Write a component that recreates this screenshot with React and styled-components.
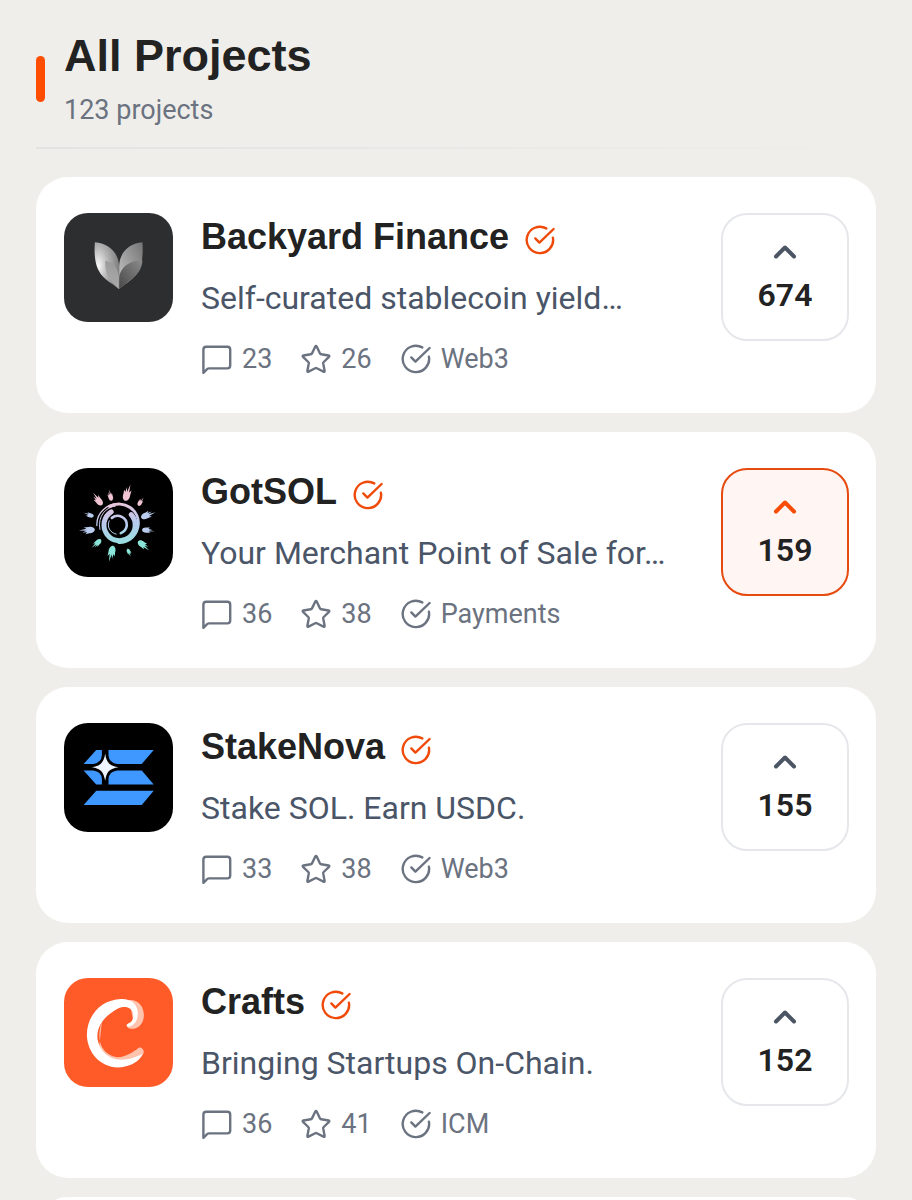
import React, { useState } from "react";
import styled, { createGlobalStyle } from "styled-components";

const GlobalStyle = createGlobalStyle`
  * {
    box-sizing: border-box;
  }
  html {
    scrollbar-width: none;
  }
  body {
    margin: 0;
    background-color: #efeeea;
    font-family: Roboto, "Noto Sans", sans-serif;
  }
`;

const Page = styled.main`
  padding: 28px 36px 0;
`;

const Header = styled.header`
  display: flex;
  align-items: center;
  gap: 19px;
`;

const Accent = styled.span`
  width: 9px;
  height: 46px;
  border-radius: 5px;
  background-color: #ff4d00;
`;

const Heading = styled.h1`
  margin: 0 0 7px;
  color: #222222;
  font-family: "Liberation Sans", Arial, sans-serif;
  font-size: 45px;
  font-weight: 700;
  line-height: 56px;
`;

const Total = styled.p`
  margin: 0;
  color: #6b7280;
  font-size: 27px;
  line-height: 38px;
`;

const Divider = styled.hr`
  height: 2px;
  margin: 18px 0 28px;
  border: none;
  background: linear-gradient(to right, #e3e3e2, #efeeea);
`;

const List = styled.ul`
  display: flex;
  flex-direction: column;
  gap: 19px;
  margin: 0;
  padding: 0;
  list-style: none;
`;

const Card = styled.li`
  display: flex;
  align-items: flex-start;
  gap: 28px;
  min-height: 64px;
  padding: 36px 27px 35px 28px;
  border-radius: 32px;
  background-color: #ffffff;
`;

const Logo = styled.svg`
  flex: none;
  width: 109px;
  height: 109px;
  border-radius: 24px;
  background-color: ${(props) => props.$color};
`;

const Info = styled.div`
  flex: 1;
  min-width: 0;
`;

const NameRow = styled.div`
  display: flex;
  align-items: center;
  gap: 15px;
  height: 48px;
  margin-bottom: 14px;
  color: #f04a0a;
  svg {
    margin-top: 6px;
  }
`;

const Name = styled.h2`
  margin: 0;
  color: #222222;
  font-family: "Liberation Sans", Arial, sans-serif;
  font-size: 36px;
  font-weight: 700;
  line-height: 48px;
`;

const Description = styled.p`
  margin: 0 0 19px;
  overflow: hidden;
  color: #4a5568;
  font-size: 32px;
  line-height: 46px;
  text-overflow: ellipsis;
  white-space: nowrap;
`;

const Meta = styled.div`
  display: flex;
  gap: 28px;
  color: #6b7280;
  font-size: 27px;
  line-height: 38px;
`;

const MetaItem = styled.span`
  display: flex;
  align-items: center;
  gap: 9px;
`;

const Icon = styled.svg`
  flex: none;
  width: 32px;
  height: 32px;
  fill: none;
  stroke: currentColor;
  stroke-width: 2.4;
  stroke-linecap: round;
  stroke-linejoin: round;
`;

const VoteButton = styled.button`
  display: flex;
  flex: none;
  flex-direction: column;
  align-items: center;
  width: 128px;
  height: 128px;
  padding: 19px 0 0;
  border: 2px solid ${(props) => (props.$voted ? "#e64a0f" : "#e5e7eb")};
  border-radius: 26px;
  background-color: ${(props) => (props.$voted ? "#fff5f2" : "#ffffff")};
  color: #222222;
  font-family: inherit;
  font-size: 32px;
  font-weight: 600;
  line-height: 50px;
  cursor: pointer;
  svg {
    width: 36px;
    height: 36px;
    stroke: ${(props) => (props.$voted ? "#f84b05" : "#4b5563")};
    stroke-width: 4;
  }
`;

const CheckIcon = () => (
  <Icon viewBox="0 0 32 32" aria-hidden="true">
    <path d="M22.3 4.4 A13.2 13.2 0 1 0 28.9 13.6" />
    <path d="M11.3 14.4 L15.4 18.6 L29.6 5" />
  </Icon>
);

const CommentIcon = () => (
  <Icon viewBox="0 0 32 32" aria-hidden="true">
    <path d="M2.4 29.8 V6.6 Q2.4 3.8 5.2 3.8 H26.4 Q29.2 3.8 29.2 6.6 V22.6 Q29.2 25.4 26.4 25.4 H8 Q6.4 25.4 5.4 26.8 Z" />
  </Icon>
);

const StarIcon = () => (
  <Icon viewBox="0 0 32 32" aria-hidden="true">
    <path d="M15.3 3.6 Q16 2.4 16.7 3.6 L20 10.4 Q20.4 11.2 21.2 11.3 L28.6 12.5 Q29.8 12.8 29 13.8 L23.7 19 Q23.1 19.6 23.2 20.4 L24.6 27.8 Q24.7 29.2 23.5 28.6 L16.8 25.2 Q16 24.8 15.2 25.2 L8.5 28.6 Q7.3 29.2 7.4 27.8 L8.8 20.4 Q8.9 19.6 8.3 19 L3 13.8 Q2.2 12.8 3.4 12.5 L10.8 11.3 Q11.6 11.2 12 10.4 Z" />
  </Icon>
);

const BackyardLogo = () => (
  <Logo $color="#2d2e30" viewBox="42 40 328 328" aria-hidden="true">
    <defs>
      <radialGradient id="leafLeft" cx="0.15" cy="0.5" r="0.8">
        <stop offset="0" stopColor="#f8f8f8" />
        <stop offset="0.5" stopColor="#b4b4b4" />
        <stop offset="1" stopColor="#828282" />
      </radialGradient>
      <linearGradient id="leafRight" x1="0" y1="1" x2="1" y2="0">
        <stop offset="0" stopColor="#c8c8c8" />
        <stop offset="1" stopColor="#747474" />
      </linearGradient>
      <linearGradient id="leafInner" x1="0" y1="0" x2="1" y2="1">
        <stop offset="0" stopColor="#818181" />
        <stop offset="1" stopColor="#cfcfcf" />
      </linearGradient>
      <linearGradient id="leafShade" x1="0" y1="1" x2="1" y2="0">
        <stop offset="0" stopColor="#484848" />
        <stop offset="1" stopColor="#8c8c8c" />
      </linearGradient>
    </defs>
    <path
      fill="url(#leafLeft)"
      d="M135 128 C174 130 206 157 208 200 L207 269 C177 240 126 236 135 128 Z"
    />
    <path
      fill="url(#leafRight)"
      d="M278 128 C240 131 209 157 208 200 L208 269 C237 240 286 236 278 128 Z"
    />
    <path
      fill="url(#leafInner)"
      d="M166 184 C192 188 205 207 207 234 L207 269 C190 252 164 232 166 184 Z"
      opacity="0.6"
    />
    <path
      fill="url(#leafShade)"
      d="M278 182 C244 181 210 202 208 236 L208 269 C237 242 276 228 278 182 Z"
    />
  </Logo>
);

// x, y, rotation and scale of every flame around the sun
const flames = [
  [146, 138, -39, 1.15],
  [182, 126, -15, 0.85],
  [231, 120, 15, 1.3],
  [271, 144, 30, 0.75],
  [290, 183, 66, 1.15],
  [291, 227, 93, 0.95],
  [278, 270, 127, 1.1],
  [237, 292, 156, 0.65],
  [186, 292, 192, 1.25],
  [143, 265, 225, 0.95],
  [117, 227, 263, 1.2],
  [120, 182, 287, 0.8],
];

const GotSolLogo = () => (
  <Logo $color="#000000" viewBox="42 40 328 328" aria-hidden="true">
    <defs>
      <linearGradient
        id="sunFill"
        gradientUnits="userSpaceOnUse"
        x1="190"
        y1="90"
        x2="210"
        y2="320"
      >
        <stop offset="0" stopColor="#f3c3d2" />
        <stop offset="0.25" stopColor="#eac6dc" />
        <stop offset="0.5" stopColor="#b9c9ee" />
        <stop offset="0.85" stopColor="#8fe3dc" />
        <stop offset="1" stopColor="#8aefcf" />
      </linearGradient>
    </defs>
    <g fill="none" stroke="url(#sunFill)" strokeLinecap="round">
      <path strokeWidth="15" d="M184 172 A47 47 0 1 0 244 180" />
      <path strokeWidth="9" d="M179 156 C219 133 276 166 264 219 C256 251 231 265 207 264" />
      <path strokeWidth="4" d="M141 213 C139 174 175 141 218 149" />
      <path strokeWidth="3" d="M150 225 C142 183 170 157 196 155" />
      <path strokeWidth="8" d="M186 190 C205 175 232 190 231 213 C230 223 223 232 213 236" />
      <path strokeWidth="3" d="M178 199 C170 216 180 235 199 239" />
    </g>
    {flames.map(([x, y, angle, size]) => {
      const color = y < 160 ? "#f1c4d4" : y < 240 ? "#b9ccee" : "#8be5d8";
      return (
        <path
          key={angle}
          fill={color}
          transform={`translate(${x} ${y}) rotate(${angle}) scale(${size})`}
          d="M0 15 C-6 14 -9 7 -8 0 L-9 -10 L-5 -5 L-4 -17 L-1 -6 L2 -25 L4 -6 L8 -12 L8 0 C9 7 6 14 0 15 Z"
        />
      );
    })}
  </Logo>
);

const StakeNovaLogo = () => (
  <Logo $color="#000000" viewBox="42 42 328 328" aria-hidden="true">
    <g fill="#3f98ff">
      <path d="M139 123 H156 V140 Q154 162 130 165 H101 Z" />
      <path d="M176 123 H312 L276 165 H202 Q178 162 176 140 Z" />
      <path d="M101 185 H130 Q154 188 156 210 V227 H139 Z" />
      <path d="M176 227 V210 Q178 188 202 185 H276 L312 227 Z" />
      <path d="M139 246 H312 L276 289 H101 Z" />
    </g>
    <path
      d="M166 134 C169 161 179 171 206 175 C179 179 170 188 166 216 C161 188 152 179 126 175 C152 171 162 161 166 134 Z"
      fill="#eef5ff"
    />
  </Logo>
);

const CraftsLogo = () => (
  <Logo $color="#ff5b29" viewBox="42 42 328 328" aria-hidden="true">
    <path
      fill="#ffc3ae"
      d="M238 108 C267 106 285 130 282 160 C279 184 262 196 243 195 C237 194 231 190 231 185 C231 177 248 177 249 164 Z M156 172 C140 222 150 257 181 274 C210 291 244 270 267 252 C276 247 285 260 281 269 C266 298 232 309 204 310 L145 278 Z"
    />
    <path
      fill="#ffffff"
      d="M250 150 C246 128 223 124 202 135 C164 155 138 190 143 226 C148 256 168 278 196 286 C221 292 256 283 279 270 C266 299 231 311 204 311 C151 309 114 268 111 217 C109 158 151 107 214 105 C244 104 262 120 264 144 C266 170 253 187 235 189 C227 186 231 181 237 179 C248 176 252 164 250 150 Z"
    />
  </Logo>
);

const projects = [
  {
    name: "Backyard Finance",
    description: "Self-curated stablecoin yield…",
    comments: 23,
    stars: 26,
    category: "Web3",
    votes: 674,
    logo: BackyardLogo,
  },
  {
    name: "GotSOL",
    description: "Your Merchant Point of Sale for…",
    comments: 36,
    stars: 38,
    category: "Payments",
    votes: 159,
    logo: GotSolLogo,
  },
  {
    name: "StakeNova",
    description: "Stake SOL. Earn USDC.",
    comments: 33,
    stars: 38,
    category: "Web3",
    votes: 155,
    logo: StakeNovaLogo,
  },
  {
    name: "Crafts",
    description: "Bringing Startups On-Chain.",
    comments: 36,
    stars: 41,
    category: "ICM",
    votes: 152,
    logo: CraftsLogo,
  },
];

const Project = ({ project, voted, onVote }) => {
  const ProjectLogo = project.logo;

  return (
    <Card>
      <ProjectLogo />
      <Info>
        <NameRow>
          <Name>{project.name}</Name>
          <CheckIcon />
        </NameRow>
        <Description>{project.description}</Description>
        <Meta>
          <MetaItem>
            <CommentIcon />
            {project.comments}
          </MetaItem>
          <MetaItem>
            <StarIcon />
            {project.stars}
          </MetaItem>
          <MetaItem>
            <CheckIcon />
            {project.category}
          </MetaItem>
        </Meta>
      </Info>
      <VoteButton
        type="button"
        $voted={voted}
        aria-pressed={voted}
        onClick={onVote}
      >
        <Icon viewBox="0 0 36 36" aria-hidden="true">
          <path d="M9 22.5 L18 13.5 L27 22.5" />
        </Icon>
        {project.votes}
      </VoteButton>
    </Card>
  );
};

const App = () => {
  const [selected, setSelected] = useState("GotSOL");

  return (
    <>
      <GlobalStyle />
      <Page>
        <Header>
          <Accent />
          <div>
            <Heading>All Projects</Heading>
            <Total>123 projects</Total>
          </div>
        </Header>
        <Divider />
        <List>
          {projects.map((project) => (
            <Project
              key={project.name}
              project={project}
              voted={project.name === selected}
              onVote={() => setSelected(project.name)}
            />
          ))}
          <Card aria-hidden="true" />
        </List>
      </Page>
    </>
  );
};

export default App;
